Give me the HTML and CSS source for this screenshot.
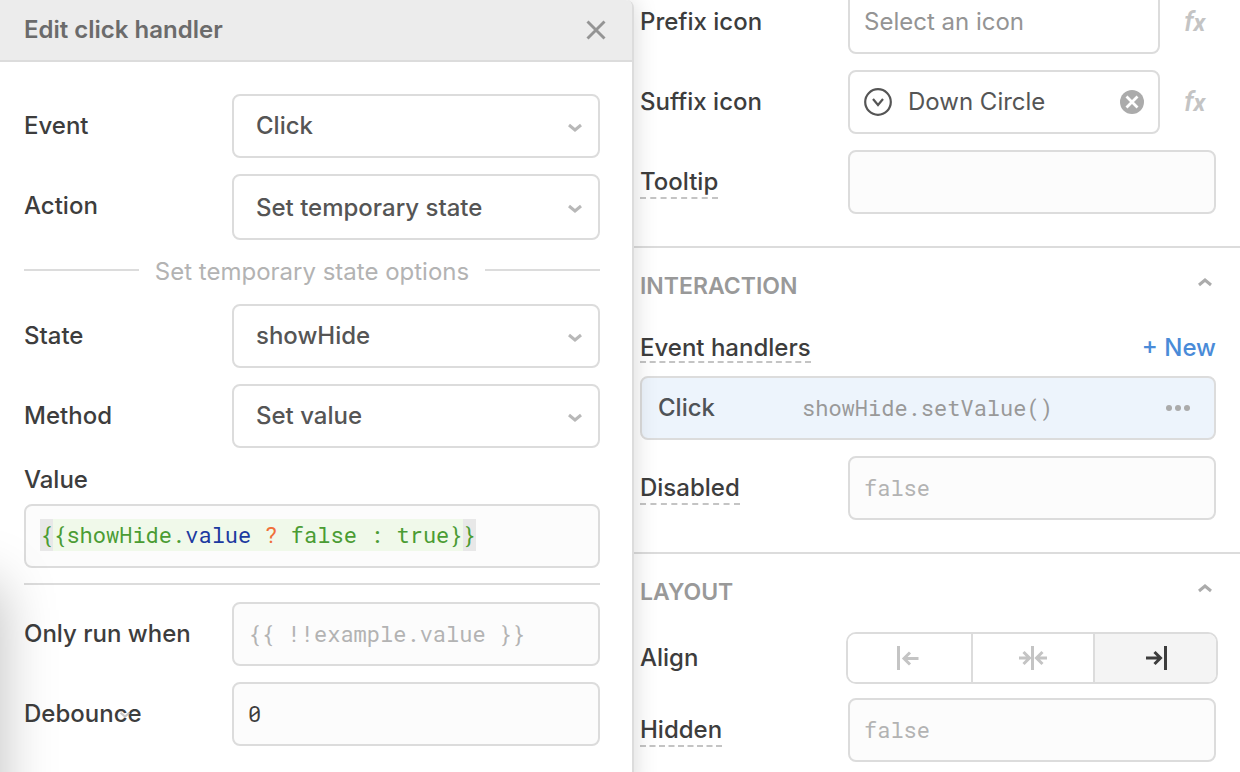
FILE: index.html
```html
<!DOCTYPE html>
<html lang="en">
<head>
<meta charset="utf-8">
<title>Edit click handler</title>
<link rel="stylesheet" href="styles.css">
</head>
<body>
<svg class="sprite" aria-hidden="true">
  <symbol id="chevron-down" viewBox="0 0 16 10"><path d="M2 2l6 5 6-5" fill="none" stroke="currentColor" stroke-width="3"/></symbol>
  <symbol id="chevron-up" viewBox="0 0 16 10"><path d="M2 8l6-5 6 5" fill="none" stroke="currentColor" stroke-width="3"/></symbol>
</svg>
<main class="app">
  <section class="editor" aria-labelledby="editor-title">
    <header class="editor-header">
      <h1 class="editor-title" id="editor-title">Edit click handler</h1>
      <button class="icon-button" type="button" aria-label="Close">
        <svg class="close-icon" viewBox="0 0 20 20"><path d="M1.500 1.500l17 17M18.500 1.500l-17 17" fill="none" stroke="currentColor" stroke-width="2.900"/></svg>
      </button>
    </header>
    <form class="editor-body">
      <div class="row">
        <label class="label" for="event">Event</label>
        <div class="select-wrap">
          <select class="control select" id="event"><option>Click</option></select>
          <svg class="chevron"><use href="#chevron-down"/></svg>
        </div>
      </div>
      <div class="row">
        <label class="label" for="action">Action</label>
        <div class="select-wrap">
          <select class="control select select-tall" id="action"><option>Set temporary state</option></select>
          <svg class="chevron"><use href="#chevron-down"/></svg>
        </div>
      </div>
      <div class="divider"><span class="divider-text">Set temporary state options</span></div>
      <div class="row">
        <label class="label" for="state">State</label>
        <div class="select-wrap">
          <select class="control select" id="state"><option>showHide</option></select>
          <svg class="chevron"><use href="#chevron-down"/></svg>
        </div>
      </div>
      <div class="row">
        <label class="label" for="method">Method</label>
        <div class="select-wrap">
          <select class="control select" id="method"><option>Set value</option></select>
          <svg class="chevron"><use href="#chevron-down"/></svg>
        </div>
      </div>
      <div class="value-label" id="value-label">Value</div>
      <div class="control code-editor" role="textbox" contenteditable="true" spellcheck="false" aria-labelledby="value-label"><code class="code"><span class="brace">{</span>{showHide.<span class="prop">value</span> <span class="operator">?</span> false : true}<span class="brace">}</span></code></div>
      <hr class="rule">
      <div class="row">
        <label class="label" for="only-run">Only run when</label>
        <input class="control input" id="only-run" type="text" placeholder="{{ !!example.value }}">
      </div>
      <div class="row">
        <label class="label label-resizable" for="debounce">Debounce<svg class="label-chevron"><use href="#chevron-down"/></svg></label>
        <input class="control input" id="debounce" type="text" value="0">
      </div>
    </form>
  </section>

  <aside class="inspector">
    <section class="group group-first">
      <div class="row">
        <label class="label" for="prefix">Prefix icon</label>
        <div class="with-fx">
          <input class="control icon-input" id="prefix" type="text" placeholder="Select an icon">
          <button class="icon-button fx" type="button" aria-label="Use expression for prefix icon">f<span class="fx-x">x</span></button>
        </div>
      </div>
      <div class="row">
        <label class="label" for="suffix">Suffix icon</label>
        <div class="with-fx">
          <div class="control icon-picker">
            <svg class="circle-icon" viewBox="0 0 28 28" fill="none" stroke="currentColor"><circle cx="14" cy="14" r="12.800" stroke-width="2.200"/><path d="M9 11l5 6 5-6" stroke-width="2.200"/></svg>
            <input class="picker-input" id="suffix" type="text" value="Down Circle">
            <button class="icon-button" type="button" aria-label="Clear suffix icon">
              <svg class="clear-icon" viewBox="0 0 24 24"><circle cx="12" cy="12" r="12" fill="currentColor"/><path d="M6.500 6.500l11 11M17.500 6.500l-11 11" stroke="#fff" stroke-width="2.800"/></svg>
            </button>
          </div>
          <button class="icon-button fx" type="button" aria-label="Use expression for suffix icon">f<span class="fx-x">x</span></button>
        </div>
      </div>
      <div class="row">
        <label class="label" for="tooltip"><span class="hint">Tooltip</span></label>
        <input class="control input" id="tooltip" type="text">
      </div>
    </section>

    <section class="group">
      <div class="group-header">
        <h2 class="group-title">INTERACTION</h2>
        <button class="icon-button collapse" type="button" aria-label="Collapse interaction"><svg class="collapse-icon"><use href="#chevron-up"/></svg></button>
      </div>
      <div class="handlers-header">
        <span class="label-text hint">Event handlers</span>
        <button class="new-button" type="button">+ New</button>
      </div>
      <div class="control handler">
        <span class="handler-event">Click</span>
        <code class="handler-code">showHide.setValue()</code>
        <button class="icon-button" type="button" aria-label="Handler options">
          <svg class="dots-icon" viewBox="0 0 24 6" fill="currentColor"><circle cx="3" cy="3" r="3"/><circle cx="12" cy="3" r="3"/><circle cx="21" cy="3" r="3"/></svg>
        </button>
      </div>
      <div class="row">
        <label class="label" for="disabled"><span class="hint">Disabled</span></label>
        <input class="control input" id="disabled" type="text" placeholder="false">
      </div>
    </section>

    <section class="group">
      <div class="group-header group-header-loose">
        <h2 class="group-title">LAYOUT</h2>
        <button class="icon-button collapse" type="button" aria-label="Collapse layout"><svg class="collapse-icon"><use href="#chevron-up"/></svg></button>
      </div>
      <div class="row row-align">
        <span class="label" id="align-label">Align</span>
        <div class="segmented" role="group" aria-labelledby="align-label">
          <button class="segment" type="button" aria-label="Align left"><svg class="align-icon" viewBox="0 0 28 24" fill="none" stroke="currentColor" stroke-width="3"><path d="M3.500 0v24M23.500 12.500H9M15 6.500l-6 6 6 6"/></svg></button>
          <button class="segment" type="button" aria-label="Align center"><svg class="align-icon" viewBox="0 0 28 24" fill="none" stroke="currentColor" stroke-width="3"><path d="M13.500 0v24M0 12h10M4.500 6l6 6-6 6M28 12H18M23.500 6l-6 6 6 6"/></svg></button>
          <button class="segment segment-active" type="button" aria-label="Align right" aria-pressed="true"><svg class="align-icon" viewBox="0 0 28 24" fill="none" stroke="currentColor" stroke-width="3"><path d="M23.500 0v24M4 12h14.500M12.500 6l6 6-6 6"/></svg></button>
        </div>
      </div>
      <div class="row">
        <label class="label" for="hidden"><span class="hint">Hidden</span></label>
        <input class="control input" id="hidden" type="text" placeholder="false">
      </div>
    </section>
  </aside>
</main>
</body>
</html>
```
FILE: styles.css
```css
* { box-sizing: border-box; }

body {
  margin: 0;
  color: #3d3d3d;
  background: #fff;
  font: 500 24px/32px Inter, "Liberation Sans", sans-serif;
}

button, input, select { font: inherit; color: inherit; margin: 0; }
svg { display: block; }
.sprite { position: absolute; width: 0; height: 0; }

.app {
  display: grid;
  grid-template-columns: minmax(0, 634fr) minmax(0, 606fr);
  height: 100vh;
  overflow: hidden;
}

.editor {
  position: relative;
  z-index: 1;
  background: #fff;
  border-right: 2px solid #dcdcdc;
  border-top-right-radius: 8px;
  box-shadow: 0 0 24px rgba(0, 0, 0, 0.16);
}

/* Shadow cast by the neighbouring panel on the left */
.editor::after {
  content: "";
  position: absolute;
  top: 584px;
  bottom: -80px;
  left: -100px;
  width: 100px;
  box-shadow: 0 0 56px rgba(0, 0, 0, 0.26);
  pointer-events: none;
}

.editor-header {
  display: flex;
  align-items: center;
  justify-content: space-between;
  height: 62px;
  padding: 0 26px 0 24px;
  background: #ececec;
  border-bottom: 2px solid #dcdcdc;
  border-top-right-radius: 6px;
}

.editor-title { margin: 0; font-size: 24px; font-weight: 600; color: #6b6b6b; }

.icon-button {
  display: block;
  flex: none;
  padding: 0;
  border: 0;
  background: none;
  color: #ababab;
  cursor: pointer;
}

.close-icon { width: 20px; height: 20px; color: #949494; }

.editor-body { padding: 32px 32px 0 24px; }

.row {
  display: grid;
  grid-template-columns: 208px minmax(0, 1fr);
  margin-bottom: 16px;
}

.label { padding: 16px 0; height: 64px; white-space: nowrap; }

.control {
  width: 100%;
  height: 64px;
  border: 2px solid #dcdcdc;
  border-radius: 8px;
  background: #fff;
  outline: 0;
}

.select-wrap { display: grid; align-items: center; }
.select-wrap > * { grid-area: 1 / 1; }
.select { appearance: none; padding: 0 48px 0 22px; color: #555; }
.select-tall { height: 66px; padding-top: 2px; }

.chevron {
  justify-self: end;
  width: 16px;
  height: 10px;
  margin: 4px 17px 0 0;
  color: #b8b8b8;
  pointer-events: none;
}

.divider {
  display: flex;
  align-items: center;
  gap: 16px;
  height: 32px;
  margin-bottom: 16px;
  color: #b3b3b3;
  font-weight: 400;
  white-space: nowrap;
}

.divider::before, .divider::after { content: ""; flex: 1; height: 2px; margin-bottom: 4px; background: #dcdcdc; }

.value-label { margin-bottom: 8px; }

.input {
  padding: 0 14px 2px;
  background: #fcfcfc;
  font: 400 22px/32px "Roboto Mono", "DejaVu Sans Mono", monospace;
}

::placeholder { color: #b3b3b3; opacity: 1; }

.code-editor { padding: 13px 14px; background: #fcfcfc; overflow: hidden; white-space: nowrap; }
.code {
  display: inline-block;
  height: 32px;
  font: 400 22px/32px "Roboto Mono", "DejaVu Sans Mono", monospace;
  color: #4a9c33;
  background: #f0f9ea;
}
.brace { display: inline-block; background: #e8e8e8; }
.prop { color: #1c3aa0; }
.operator { color: #f0703a; }

.rule { height: 2px; margin: 15px 0 17px; border: 0; background: #dcdcdc; }

.label-resizable { position: relative; }
.label-chevron {
  position: absolute;
  left: 95px;
  top: 29px;
  width: 12px;
  height: 8px;
  color: #b8b8b8;
  opacity: 0.8;
}

.inspector { background: #fff; }
.group { padding: 0 24px 16px 6px; border-bottom: 2px solid #dcdcdc; }
.group:last-child { border-bottom: 0; }
.group-first { margin-top: -10px; }

.hint {
  padding-bottom: 1px;
  border-bottom: 2px dashed #c4c4c4;
}

.with-fx { display: flex; align-items: center; gap: 24px; }
.icon-input { flex: 1; min-width: 0; padding: 0 14px 2px; font-weight: 400; }
.icon-input::placeholder { color: #949494; }

.icon-picker {
  display: flex;
  align-items: center;
  flex: 1;
  gap: 16px;
  min-width: 0;
  padding: 0 14px;
  color: #555;
}
.picker-input {
  flex: 1;
  min-width: 0;
  padding: 0;
  border: 0;
  outline: 0;
  background: none;
  font-weight: 400;
}
.circle-icon { width: 28px; height: 28px; flex: none; }
.clear-icon { width: 24px; height: 24px; }

.fx {
  width: 32px;
  color: #c4c4c4;
  font: italic 500 28px/32px Roboto, sans-serif;
  text-align: left;
}
.fx-x { font-size: 24px; font-weight: 700; }

.group-header {
  display: flex;
  align-items: center;
  justify-content: space-between;
  padding: 22px 3px 20px 0;
}
.group-header-loose { padding-bottom: 24px; }
.group-title { margin: 0; font-size: 23px; font-weight: 600; color: #999; }
.collapse-icon { width: 16px; height: 10px; margin-bottom: 8px; }

.handlers-header {
  display: flex;
  align-items: center;
  justify-content: space-between;
  height: 32px;
  margin: 10px 0 12px;
}
.handlers-header .hint { padding: 0; line-height: 27px; }

.new-button { padding: 0; border: 0; background: none; color: #4a8bd8; cursor: pointer; }

.handler {
  display: grid;
  grid-template-columns: 144px minmax(0, 1fr) auto;
  align-items: center;
  margin-bottom: 16px;
  padding: 0 24px 0 16px;
  background: #edf4fc;
}
.handler-event { color: #4f5357; }
.handler-code {
  color: #999;
  font: 400 22px/32px "Roboto Mono", "DejaVu Sans Mono", monospace;
}
.dots-icon { width: 24px; height: 6px; }

.row-align { align-items: center; margin-bottom: 14px; }
.row-align .label { height: 52px; padding: 10px 0; }

/* The button group is slightly wider than the fields around it */
.segmented {
  display: grid;
  grid-template-columns: repeat(3, minmax(0, 1fr));
  height: 52px;
  margin: 0 -2px;
  border: 2px solid #dcdcdc;
  border-radius: 10px;
  overflow: hidden;
}
.segment {
  display: grid;
  place-items: center;
  padding: 0;
  border: 0;
  background: #fff;
  color: #c4c4c4;
  cursor: pointer;
}
.segment + .segment { border-left: 2px solid #dcdcdc; }
.segment-active { background: #f4f4f4; color: #3d3d3d; }
.align-icon { width: 28px; height: 24px; }
```
